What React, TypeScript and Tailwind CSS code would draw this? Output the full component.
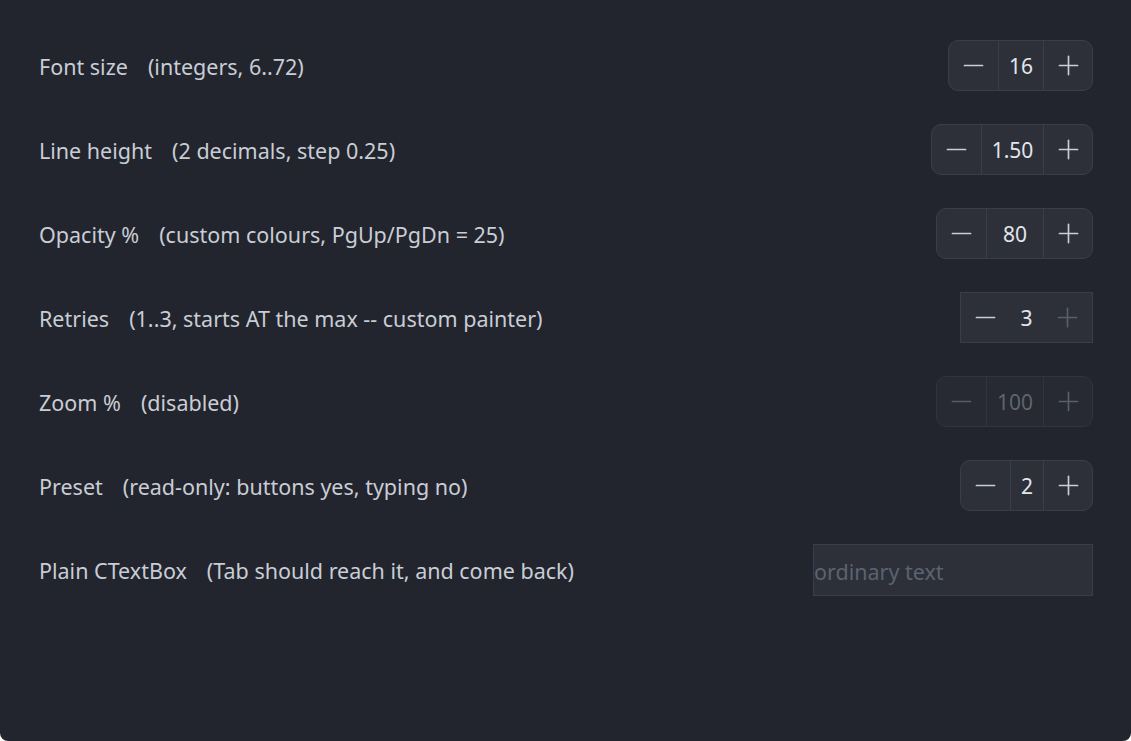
import { Minus, Plus } from "lucide-react";

type Row = {
  label: string;
  hint: string;
  value: string;
  valueW: string;
  variant?: "normal" | "flat" | "disabled";
  plusDisabled?: boolean;
};

const rows: Row[] = [
  { label: "Font size", hint: "(integers, 6..72)", value: "16", valueW: "w-[45px]" },
  { label: "Line height", hint: "(2 decimals, step 0.25)", value: "1.50", valueW: "w-[62px]" },
  { label: "Opacity %", hint: "(custom colours, PgUp/PgDn = 25)", value: "80", valueW: "w-[57px]" },
  {
    label: "Retries",
    hint: "(1..3, starts AT the max -- custom painter)",
    value: "3",
    valueW: "w-[33px]",
    variant: "flat",
    plusDisabled: true,
  },
  { label: "Zoom %", hint: "(disabled)", value: "100", valueW: "w-[57px]", variant: "disabled" },
  { label: "Preset", hint: "(read-only: buttons yes, typing no)", value: "2", valueW: "w-[33px]" },
];

function Stepper({ row }: { row: Row }) {
  const variant = row.variant ?? "normal";
  const disabled = variant === "disabled";
  const flat = variant === "flat";
  const box = flat
    ? "border-[#3a3e48] bg-[#2d3039]"
    : disabled
      ? "rounded-[10px] border-[#31343d] bg-[#272a32]"
      : "rounded-[10px] border-[#3a3e48] bg-[#2d3039]";
  const divider = flat ? "" : disabled ? "border-l border-[#31343d]" : "border-l border-[#3a3e48]";
  const iconColor = disabled ? "text-[#565b66]" : "text-[#c9cdd5]";
  const plusColor = disabled || row.plusDisabled ? "text-[#5a5f6a]" : "text-[#c9cdd5]";
  const valueColor = disabled ? "text-[#5f6470]" : "text-[#e1e5ec]";

  return (
    <div className={`flex h-[51px] border ${box}`}>
      <div className={`flex w-[49px] items-center justify-center ${iconColor}`}>
        <Minus size={31} strokeWidth={1.3} />
      </div>
      <div
        className={`flex ${row.valueW} items-center justify-center pt-[3px] ${divider} ${valueColor} text-[21px]`}
      >
        {row.value}
      </div>
      <div className={`flex w-[49px] items-center justify-center ${divider} ${plusColor}`}>
        <Plus size={31} strokeWidth={1.3} />
      </div>
    </div>
  );
}

export default function App() {
  return (
    <div className="h-[741px] w-[1131px] bg-white">
      <div
        className="flex h-full w-full flex-col gap-[33px] rounded-b-[8px] bg-[#22252d] pl-[39px] pr-[38px] pt-[40px]"
        style={{ fontFamily: '"Noto Sans", sans-serif' }}
      >
        {rows.map((r) => (
          <div key={r.label} className="flex h-[51px] items-center justify-between">
            <div className="flex gap-[20px] pt-[4px] text-[21.5px] text-[#c9cdd5]">
              <span>{r.label}</span>
              <span>{r.hint}</span>
            </div>
            <Stepper row={r} />
          </div>
        ))}
        <div className="flex h-[51px] items-center justify-between">
          <div className="flex gap-[20px] pt-[4px] text-[21.5px] text-[#c9cdd5]">
            <span>Plain CTextBox</span>
            <span>(Tab should reach it, and come back)</span>
          </div>
          <div className="flex h-[52px] w-[280px] items-center border border-[#3a3e48] bg-[#2d3039] pt-[5px] text-[21.5px] text-[#5b6370]">
            ordinary text
          </div>
        </div>
      </div>
    </div>
  );
}
